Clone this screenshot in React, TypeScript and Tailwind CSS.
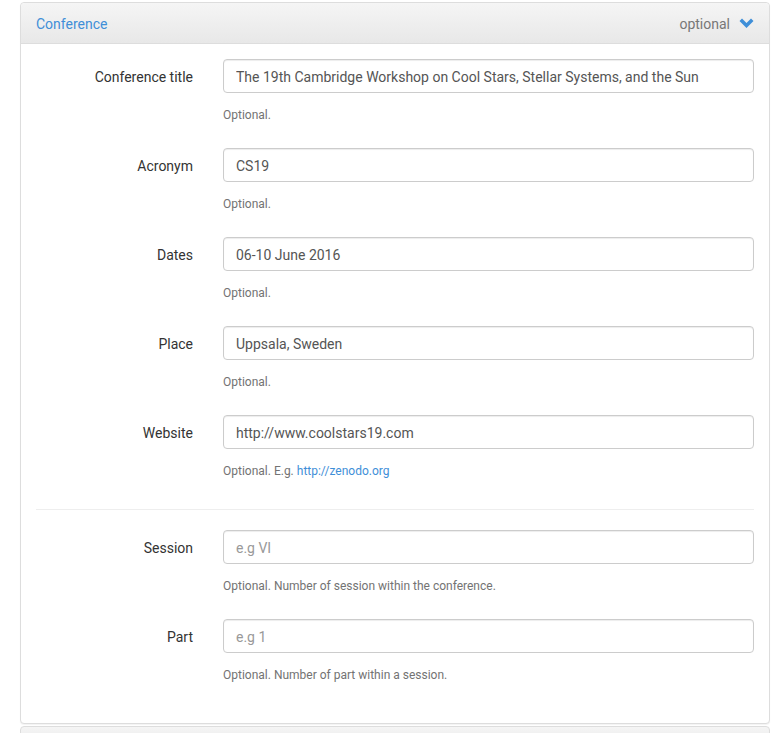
const fields = [
  { label: 'Conference title', value: 'The 19th Cambridge Workshop on Cool Stars, Stellar Systems, and the Sun', help: 'Optional.' },
  { label: 'Acronym', value: 'CS19', help: 'Optional.' },
  { label: 'Dates', value: '06-10 June 2016', help: 'Optional.' },
  { label: 'Place', value: 'Uppsala, Sweden', help: 'Optional.' },
  { label: 'Website', value: 'http://www.coolstars19.com', help: 'Optional. E.g.', link: 'http://zenodo.org' },
];

const extra = [
  { label: 'Session', placeholder: 'e.g VI', help: 'Optional. Number of session within the conference.' },
  { label: 'Part', placeholder: 'e.g 1', help: 'Optional. Number of part within a session.' },
];

type Row = { label: string; value?: string; placeholder?: string; help: string; link?: string };

const FormRow = ({ row }: { row: Row }) => (
  <div className="flex mb-[20px]">
    <div className="w-[172px] shrink-0 h-[34px] pt-[2px] flex items-center justify-end pr-[15px] text-[14px] text-[#333]">
      {row.label}
    </div>
    <div className="flex-1 ml-[15px]">
      <input
        readOnly
        defaultValue={row.value}
        placeholder={row.placeholder}
        className="w-full h-[34px] pt-[2px] px-[12px] border border-[#ccc] rounded-[4px] text-[14px] text-[#555] placeholder:text-[#999] outline-none shadow-[inset_0_1px_1px_rgba(0,0,0,0.075)] bg-white"
      />
      <p className="mt-[12px] mb-[3px] text-[12px] leading-[20px] text-[#737373]">
        {row.help}
        {row.link && (
          <>
            {' '}
            <a className="text-[#3f8fd8]">{row.link}</a>
          </>
        )}
      </p>
    </div>
  </div>
);

export default function App() {
  return (
    <div className="bg-white min-h-[733px] pt-[2px] pl-[20px] font-['Roboto',sans-serif] overflow-hidden">
      <div className="w-[750px] border border-[#ddd] rounded-[4px] shadow-[0_1px_1px_rgba(0,0,0,0.05)] bg-white">
        <div className="h-[41px] pt-[3px] flex items-center justify-between px-[15px] border-b border-[#ddd] rounded-t-[4px] bg-gradient-to-b from-[#f5f5f5] to-[#e8e8e8]">
          <span className="text-[14px] text-[#3f8fd8]">Conference</span>
          <div className="flex items-center gap-[9px] text-[14px] text-[#777]">
            <span>optional</span>
            <svg width="15" height="11" viewBox="0 0 15 11" className="mt-[-2px]">
              <path d="M0.5 3 L3 0.5 L7.5 5 L12 0.5 L14.5 3 L7.5 10 Z" fill="#3f8fd8" />
            </svg>
          </div>
        </div>
        <div className="pt-[15px] px-[15px] pb-[15px]">
          {fields.map((f) => (
            <FormRow key={f.label} row={f} />
          ))}
          <hr className="border-t border-[#eee] mt-[25px] mb-[20px]" />
          {extra.map((f) => (
            <FormRow key={f.label} row={f} />
          ))}
        </div>
      </div>
      <div className="w-[750px] mt-[2px] h-[20px] border border-[#ddd] rounded-t-[4px] bg-gradient-to-b from-[#f5f5f5] to-[#e8e8e8]" />
    </div>
  );
}
